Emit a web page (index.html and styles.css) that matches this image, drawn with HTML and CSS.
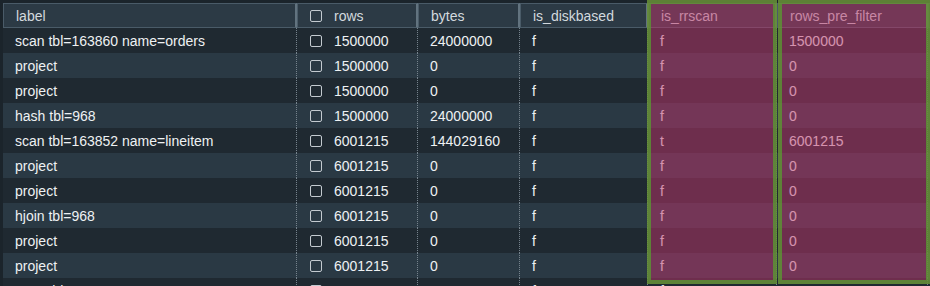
FILE: index.html
```html
<!DOCTYPE html>
<html>
<head>
<meta charset="utf-8">
<link rel="stylesheet" href="styles.css">
</head>
<body>
<div class="grid">
  <div class="hd first">label</div>
  <div class="hd"><span class="cb"></span>rows</div>
  <div class="hd">bytes</div>
  <div class="hd">is_diskbased</div>
  <div class="hd">is_rrscan</div>
  <div class="hd">rows_pre_filter</div>
  <div class="hd"></div>

  <div class="c dk">scan tbl=163860 name=orders</div><div class="c dk cbc"><span class="cb"></span>1500000</div><div class="c dk">24000000</div><div class="c dk">f</div><div class="c dk">f</div><div class="c dk">1500000</div><div class="c dk"></div>
  <div class="c lt">project</div><div class="c lt cbc"><span class="cb"></span>1500000</div><div class="c lt">0</div><div class="c lt">f</div><div class="c lt">f</div><div class="c lt">0</div><div class="c lt"></div>
  <div class="c dk">project</div><div class="c dk cbc"><span class="cb"></span>1500000</div><div class="c dk">0</div><div class="c dk">f</div><div class="c dk">f</div><div class="c dk">0</div><div class="c dk"></div>
  <div class="c lt">hash tbl=968</div><div class="c lt cbc"><span class="cb"></span>1500000</div><div class="c lt">24000000</div><div class="c lt">f</div><div class="c lt">f</div><div class="c lt">0</div><div class="c lt"></div>
  <div class="c dk">scan tbl=163852 name=lineitem</div><div class="c dk cbc"><span class="cb"></span>6001215</div><div class="c dk">144029160</div><div class="c dk">f</div><div class="c dk">t</div><div class="c dk">6001215</div><div class="c dk"></div>
  <div class="c lt">project</div><div class="c lt cbc"><span class="cb"></span>6001215</div><div class="c lt">0</div><div class="c lt">f</div><div class="c lt">f</div><div class="c lt">0</div><div class="c lt"></div>
  <div class="c dk">project</div><div class="c dk cbc"><span class="cb"></span>6001215</div><div class="c dk">0</div><div class="c dk">f</div><div class="c dk">f</div><div class="c dk">0</div><div class="c dk"></div>
  <div class="c lt">hjoin tbl=968</div><div class="c lt cbc"><span class="cb"></span>6001215</div><div class="c lt">0</div><div class="c lt">f</div><div class="c lt">f</div><div class="c lt">0</div><div class="c lt"></div>
  <div class="c dk">project</div><div class="c dk cbc"><span class="cb"></span>6001215</div><div class="c dk">0</div><div class="c dk">f</div><div class="c dk">f</div><div class="c dk">0</div><div class="c dk"></div>
  <div class="c lt">project</div><div class="c lt cbc"><span class="cb"></span>6001215</div><div class="c lt">0</div><div class="c lt">f</div><div class="c lt">f</div><div class="c lt">0</div><div class="c lt"></div>
  <div class="c dk">scan tbl=163868 name=customer</div><div class="c dk cbc"><span class="cb"></span>6001215</div><div class="c dk">48009720</div><div class="c dk">f</div><div class="c dk">f</div><div class="c dk">6001215</div><div class="c dk"></div>
</div>
<div class="hl hl-a"></div>
<div class="hl hl-b"></div>
</body>
</html>
```
FILE: styles.css
```css
html, body {
  margin: 0;
  height: 286px;
  overflow: hidden;
}
body {
  position: relative;
  background: #1b242b;
  font-family: "Liberation Sans", Arial, sans-serif;
  font-size: 14px;
}
.grid {
  display: grid;
  grid-template-columns: 294px 121px 102px 128px 129px 151px 120px;
  grid-auto-rows: 25px;
  margin: 3px 0 0 3px;
  width: max-content;
}
.hd {
  box-sizing: border-box;
  display: flex;
  align-items: center;
  padding-left: 12px;
  background: #2c3a45;
  border: 1px solid #4a5b68;
  border-right: 2px solid #62737f;
  color: #d3d9de;
  white-space: nowrap;
}
.c {
  box-sizing: border-box;
  display: flex;
  align-items: center;
  padding-left: 12px;
  color: #eef1f3;
  border-right: 1px dotted #76838d;
  white-space: nowrap;
}
.cbc { padding-left: 13px; }
.dk { background: #1f2931; }
.lt { background: #2a3944; }
.cb {
  box-sizing: border-box;
  width: 12px;
  height: 12px;
  border: 1px solid #c3cad0;
  border-radius: 2px;
  margin-right: 12px;
  flex: none;
}
.hd .cb { margin-top: 1px; }
.hl {
  position: absolute;
  top: 0;
  height: 284px;
  box-sizing: border-box;
  border: 4px solid rgba(102, 142, 56, 0.88);
  background: rgba(190, 52, 106, 0.5);
  background-clip: padding-box;
}
.hl-a { left: 647px; width: 130px; }
.hl-b { left: 778px; width: 152px; }
```
